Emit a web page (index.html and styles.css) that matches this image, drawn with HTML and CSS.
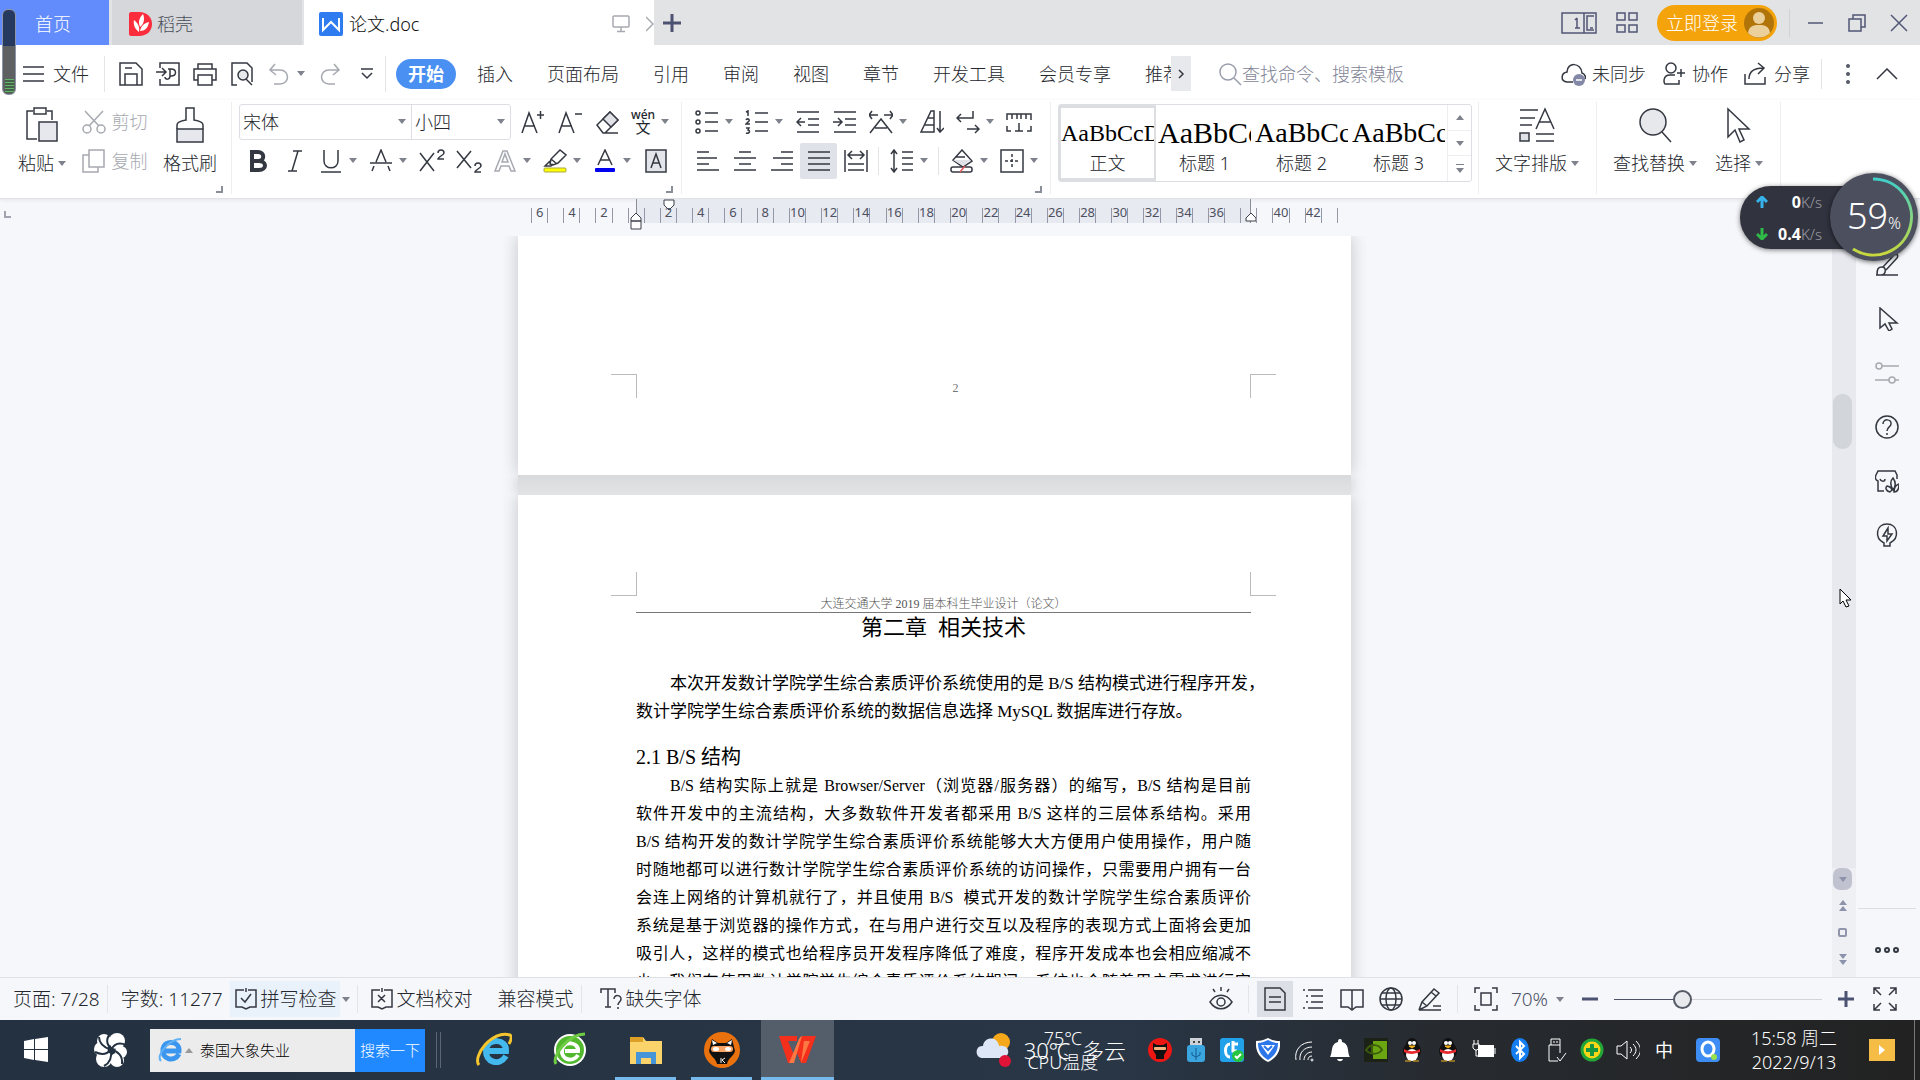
FILE: index.html
```html
<!DOCTYPE html>
<html lang="zh-CN">
<head>
    <meta charset="UTF-8">
    <meta name="viewport" content="width=device-width, initial-scale=1.0">
    <title>论文.doc</title>
    <link rel="stylesheet" href="styles.css">
</head>
<body>
    <!-- Title bar -->
    <header class="titlebar">
        <button class="tab tab-home">首页</button>
        <button class="tab tab-store">
            <svg width="24" height="24" viewBox="0 0 24 24"><path d="M2 0h8c8 0 13 5 13 12s-5 12-13 12H2c-1 0-2-1-2-2V2c0-1 1-2 2-2z" fill="#fb2c3c"/><path d="M14 2c-4 4-5 8-3 13 4-3 5-8 3-13zM5 8c-1 5 1 9 5 12 1-5-1-9-5-12zM20 10c-5 1-8 4-9 9 5 0 8-3 9-9z" fill="#fff"/></svg>
            稻壳
        </button>
        <button class="tab tab-doc">
            <svg width="24" height="24" viewBox="0 0 24 24"><rect width="24" height="24" rx="2" fill="#2f7bf0"/><path d="M4 6v12l8-8 8 8V6" fill="none" stroke="#fff" stroke-width="2"/></svg>
            <span class="tab-name">论文.doc</span>
            <svg class="icon pale" width="18" height="18" viewBox="0 0 18 18"><rect x="1" y="1" width="16" height="11" rx="1"/><path d="M9 12v4M5 16.500h8"/></svg>
            <svg class="icon pale" width="8" height="18" viewBox="0 0 8 18"><path d="M0 2l7 7-7 7"/></svg>
        </button>
        <button class="tab-add" aria-label="新建"><svg class="icon" width="20" height="20" viewBox="0 0 20 20"><path d="M10 1v18M1 10h18"/></svg></button>
        <div class="window-tools">
            <svg class="icon" width="36" height="22" viewBox="0 0 36 22"><rect x="1" y="1" width="34" height="20"/><path d="M23 1v20M33 4h-7v14h7M16 6v10M14 8l2-2M14 16h5M29 16h3"/></svg>
            <svg class="icon" width="24" height="22" viewBox="0 0 24 22"><rect x="2" y="1" width="8" height="7"/><rect x="14" y="1" width="8" height="7"/><rect x="2" y="13" width="8" height="7"/><rect x="14" y="13" width="8" height="7"/></svg>
            <button class="login">立即登录
                <svg width="30" height="30" viewBox="0 0 30 30"><circle cx="15" cy="15" r="15" fill="#b17408"/><circle cx="15" cy="10" r="6" fill="#ecd09b"/><path d="M4 25c1-7 5-8 11-8s10 1 11 8c-6 6-16 6-22 0z" fill="#ecd09b"/></svg>
            </button>
        </div>
        <div class="window-buttons">
            <button aria-label="最小化"><svg class="icon" width="18" height="18" viewBox="0 0 18 18"><path d="M2 9h15"/></svg></button>
            <button aria-label="还原"><svg class="icon" width="18" height="18" viewBox="0 0 18 18"><rect x="1" y="5" width="12" height="12"/><path d="M5 5V1h12v12h-4"/></svg></button>
            <button aria-label="关闭"><svg class="icon" width="18" height="18" viewBox="0 0 18 18"><path d="M1 1l16 16M17 1L1 17"/></svg></button>
        </div>
    </header>

    <!-- Menu row -->
    <nav class="menubar">
        <button class="file-menu"><svg class="icon" width="24" height="16" viewBox="0 0 24 16"><path d="M1 1h21M1 8h21M1 15h21"/></svg>文件</button>
        <div class="quick">
            <button aria-label="保存"><svg class="icon" width="24" height="24" viewBox="0 0 24 24"><path d="M1 1h16l6 6v16H1zM6 23V12h12v11M6 6h7"/></svg></button>
            <button aria-label="输出为PDF"><svg class="icon" width="24" height="24" viewBox="0 0 24 24"><path d="M4 6V1h19v22H4v-6M0 10h9M6 6l4 4-4 4M12 7h3c6 0 6 7 0 7h-1M14 7v7c0 4-5 4-5 1"/></svg></button>
            <button aria-label="打印"><svg class="icon" width="24" height="24" viewBox="0 0 24 24"><path d="M5 7V2h14v5M5 18H1V7h22v11h-4M5 13h14v10H5z"/></svg></button>
            <button aria-label="打印预览"><svg class="icon" width="24" height="24" viewBox="0 0 24 24"><path d="M7 23H2V1h15l5 5v14"/><circle cx="13" cy="13" r="5" fill="#e6e8ec"/><path d="M16 17l6 6"/></svg></button>
            <button class="with-caret" aria-label="撤销"><svg class="icon pale" width="24" height="24" viewBox="0 0 24 24"><path d="M8 2L3 8l6 5M3 8h10c10 0 10 14 0 14H7"/></svg><span class="caret"></span></button>
            <button aria-label="恢复"><svg class="icon pale" width="24" height="24" viewBox="0 0 24 24"><path d="M16 2l5 6-6 5M21 8H11C1 8 1 22 11 22h6"/></svg></button>
            <button aria-label="更多"><svg class="icon" width="14" height="12" viewBox="0 0 14 12"><path d="M1 1h12M2 5l5 5 5-5"/></svg></button>
        </div>
        <div class="menu-tabs">
            <button class="active">开始</button>
            <button>插入</button>
            <button>页面布局</button>
            <button>引用</button>
            <button>审阅</button>
            <button>视图</button>
            <button>章节</button>
            <button>开发工具</button>
            <button>会员专享</button>
            <button>推荐</button>
        </div>
        <button class="menu-next" aria-label="更多选项卡"><svg class="icon" width="8" height="10" viewBox="0 0 8 10"><path d="M2 1l4 4-4 4"/></svg></button>
        <label class="search">
            <svg class="icon" width="24" height="24" viewBox="0 0 24 24"><circle cx="10" cy="10" r="8"/><path d="M16 16l7 7"/></svg>
            <input type="text" aria-label="搜索" placeholder="查找命令、搜索模板">
        </label>
        <div class="share-tools">
            <button><svg class="icon" width="25" height="24" viewBox="0 0 25 24"><path d="M12 20H6c-7-1-6-9 0-10 0-10 14-10 15 1 3 1 4 4 3 6"/><circle cx="18" cy="18" r="6" fill="#8288a6" stroke="none"/><path d="M15 18h6" stroke="#fff"/></svg>未同步</button>
            <button><svg class="icon" width="24" height="24" viewBox="0 0 24 24"><circle cx="9" cy="6" r="5"/><path d="M13 13H8c-8 0-6 9-5 9h14v-4M15 11h8M19 7v8"/></svg>协作</button>
            <button><svg class="icon" width="24" height="24" viewBox="0 0 24 24"><path d="M1 12v10h20v-7M5 17c0-8 5-11 14-11M14 1l6 5-6 6"/></svg>分享</button>
        </div>
        <button class="more-menu" aria-label="更多"><svg width="4" height="20" viewBox="0 0 4 20" fill="#555b66"><circle cx="2" cy="2" r="2"/><circle cx="2" cy="10" r="2"/><circle cx="2" cy="18" r="2"/></svg></button>
        <button class="fold-menu" aria-label="收起功能区"><svg class="icon" width="22" height="12" viewBox="0 0 22 12"><path d="M1 11L11 1l10 10"/></svg></button>
    </nav>

    <!-- Ribbon -->
    <section class="ribbon">
        <div class="group clipboard">
            <button class="big"><svg class="icon" width="34" height="36" viewBox="0 0 34 36"><path d="M8 4H2v28h10M22 4h5v9M9 1h12v6H9z"/><rect x="14" y="15" width="18" height="19" fill="#e6e8ee"/></svg><span>粘贴<i class="caret"></i></span></button>
            <div class="stack">
                <button><svg class="icon pale" width="24" height="24" viewBox="0 0 24 24"><circle cx="5" cy="19" r="4"/><circle cx="19" cy="19" r="4"/><path d="M3 1l14 15M21 1L7 16"/></svg>剪切</button>
                <button><svg class="icon pale" width="24" height="24" viewBox="0 0 24 24"><rect x="7" y="1" width="15" height="17"/><path d="M7 6H1v17h15v-5"/></svg>复制</button>
            </div>
            <button class="big"><svg class="icon" width="34" height="36" viewBox="0 0 34 36"><path d="M4 22v-4c0-2 2-4 9-5V1h8v12c7 1 9 3 9 5v4"/><rect x="4" y="22" width="26" height="13" fill="#e6e8ee"/></svg><span>格式刷</span></button>
            <i class="corner"></i>
        </div>

        <div class="group">
            <div class="tool-row">
                <div class="font-box">
                    <span class="pick font-name"><select aria-label="字体"><option>宋体</option></select><i class="caret"></i></span>
                    <span class="pick font-size"><select aria-label="字号"><option>小四</option></select><i class="caret"></i></span>
                </div>
                <button class="tool" aria-label="增大字号"><svg class="icon" width="24" height="24" viewBox="0 0 24 24"><path d="M1 23L8 3l8 20M4 16h10M16 5h7M19.500 1v8"/></svg></button>
                <button class="tool" aria-label="减小字号"><svg class="icon" width="24" height="24" viewBox="0 0 24 24"><path d="M1 23L8 3l8 20M4 16h10M17 4h7"/></svg></button>
                <button class="tool" aria-label="清除格式"><svg class="icon" width="24" height="24" viewBox="0 0 24 24"><path d="M2 15L15 2l8 8-13 13H8zM10 23h13"/><path d="M8 9l7-7 8 8-7 7z" fill="#e0e2e7"/></svg></button>
                <button class="tool drop pinyin" aria-label="拼音指南"><span>wén<b>文</b></span><i class="caret"></i></button>
            </div>
            <div class="tool-row">
                <button class="tool" aria-label="加粗"><svg class="icon bold" width="24" height="24" viewBox="0 0 24 24"><path d="M6 3v18h7c8 0 8-9 0-9H6h6c7 0 7-9 0-9z"/></svg></button>
                <button class="tool" aria-label="倾斜"><svg class="icon" width="24" height="24" viewBox="0 0 24 24"><path d="M10 2h9M5 22h9M15 2L9 22"/></svg></button>
                <button class="tool drop" aria-label="下划线"><svg class="icon" width="24" height="24" viewBox="0 0 24 24"><path d="M5 1v11c0 9 14 9 14 0V1M2 23h20"/></svg><i class="caret"></i></button>
                <button class="tool drop" aria-label="删除线"><svg class="icon" width="24" height="24" viewBox="0 0 24 24"><path d="M7 13l5-12 5 12M1 14h22M5 17l-2 5M19 17l2 5"/></svg><i class="caret"></i></button>
                <button class="tool" aria-label="上标"><svg class="icon" width="26" height="24" viewBox="0 0 26 24"><path d="M1 4l14 18M15 4L1 22M19 4c0-4 6-4 6 0 0 2-6 4-6 6h6"/></svg></button>
                <button class="tool" aria-label="下标"><svg class="icon" width="26" height="24" viewBox="0 0 26 24"><path d="M1 2l14 17M15 2L1 19M19 17c0-4 6-4 6 0 0 2-6 4-6 6h6"/></svg></button>
                <button class="tool drop" aria-label="文字效果"><svg class="icon pale" width="24" height="24" viewBox="0 0 24 24"><path d="M2 22L10 2h4l8 20h-4l-2-5H8l-2 5zM9 13h6l-3-8z"/></svg><i class="caret"></i></button>
                <button class="tool drop" aria-label="突出显示"><svg class="icon" width="24" height="24" viewBox="0 0 24 24"><path d="M7 15l1-5 9-9 6 5-8 8-5 2zM8 10l6 5M7 12l-5 5h6l2-2"/><rect x="1" y="19" width="22" height="4" rx="1" fill="#ffff00" stroke="#a7a74a" stroke-width="1"/></svg><i class="caret"></i></button>
                <button class="tool drop" aria-label="字体颜色"><svg class="icon" width="24" height="24" viewBox="0 0 24 24"><path d="M5 16l7-15 7 15M7 11h10"/><rect x="2" y="19" width="20" height="4" rx="1" fill="#0000f0" stroke="none"/></svg><i class="caret"></i></button>
                <button class="tool" aria-label="字符底纹"><svg class="icon" width="24" height="24" viewBox="0 0 24 24"><rect x="2" y="1" width="20" height="22" fill="#e3e5ea"/><path d="M7 19l5-14 5 14M9 14h6"/></svg></button>
            </div>
            <i class="corner"></i>
        </div>

        <div class="group">
            <div class="tool-row">
                <button class="tool drop" aria-label="项目符号"><svg class="icon" width="24" height="24" viewBox="0 0 24 24"><circle cx="3" cy="3" r="2"/><circle cx="3" cy="12" r="2"/><circle cx="3" cy="21" r="2"/><path d="M10 3h13M10 12h13M10 21h13"/></svg><i class="caret"></i></button>
                <button class="tool drop" aria-label="编号"><svg class="icon" width="24" height="24" viewBox="0 0 24 24"><path d="M1 2l2-1v5M1 10c1-2 4-1 3 1l-3 3h4M1 18h3l-1 2c3 1 1 4-2 3M10 3h13M10 12h13M10 21h13"/></svg><i class="caret"></i></button>
                <button class="tool" aria-label="减少缩进"><svg class="icon" width="24" height="24" viewBox="0 0 24 24"><path d="M1 2h22M12 9h11M12 15h11M1 22h22M9 12H1M5 8l-4 4 4 4"/></svg></button>
                <button class="tool" aria-label="增加缩进"><svg class="icon" width="24" height="24" viewBox="0 0 24 24"><path d="M1 2h22M12 9h11M12 15h11M1 22h22M0 12h8M5 8l4 4-4 4"/></svg></button>
                <button class="tool drop" aria-label="中文版式"><svg class="icon" width="24" height="24" viewBox="0 0 24 24"><path d="M1 23l11-14 11 14M6 18h12M0 5h9M3 1L0 5l3 4M15 5h9M21 1l3 4-3 4"/></svg><i class="caret"></i></button>
                <button class="tool" aria-label="排序"><svg class="icon" width="24" height="24" viewBox="0 0 24 24"><path d="M1 22L11 1h3v21zM8 8h6M5 15h9M20 1v21M17 18l3 4 4-4"/></svg></button>
                <button class="tool drop" aria-label="显示段落标记"><svg class="icon" width="24" height="24" viewBox="0 0 24 24"><path d="M17 1v7H1M5 4L1 8l4 4M11 19h12M19 15l4 4-4 4"/></svg><i class="caret"></i></button>
                <button class="tool" aria-label="制表位"><svg class="icon" width="26" height="20" viewBox="0 0 26 20"><path d="M1 8V2h24v6M6 2v5M11 2v5M15 2v5M20 2v5M1 14v5h4M25 14v5h-4M13 11v8M9 19h8"/></svg></button>
            </div>
            <div class="tool-row">
                <button class="tool" aria-label="左对齐"><svg class="icon" width="24" height="24" viewBox="0 0 24 24"><path d="M1 3h12M1 9h20M1 15h12M1 21h22"/></svg></button>
                <button class="tool" aria-label="居中"><svg class="icon" width="24" height="24" viewBox="0 0 24 24"><path d="M6 3h12M1 9h22M6 15h12M1 21h22"/></svg></button>
                <button class="tool" aria-label="右对齐"><svg class="icon" width="24" height="24" viewBox="0 0 24 24"><path d="M11 3h12M3 9h20M11 15h12M1 21h22"/></svg></button>
                <button class="tool pressed" aria-label="两端对齐"><svg class="icon" width="24" height="24" viewBox="0 0 24 24"><path d="M1 3h22M1 9h22M1 15h22M1 21h22"/></svg></button>
                <button class="tool" aria-label="分散对齐"><svg class="icon" width="24" height="24" viewBox="0 0 24 24"><path d="M1 1v22M23 1v22M4 15h16M4 21h16M4 6h16M8 2L4 6l4 4M16 2l4 4-4 4"/></svg></button>
                <i class="bar"></i>
                <button class="tool drop" aria-label="行距"><svg class="icon" width="24" height="24" viewBox="0 0 24 24"><path d="M4 1v22M1 5l3-4 3 4M1 19l3 4 3-4M12 3h11M12 9h11M12 15h11M12 21h11"/></svg><i class="caret"></i></button>
                <i class="bar"></i>
                <button class="tool drop" aria-label="底纹颜色"><svg class="icon" width="24" height="24" viewBox="0 0 24 24"><path d="M12 1l10 11-9 6-10-7zM5 8h10" fill="#fff"/><path d="M3 11h18l-8 6z" fill="#e0e2e7" stroke="none"/><rect x="1" y="18" width="21" height="5" rx="2" fill="#fff"/><path d="M10 23l5-6" stroke="#e05a5a"/></svg><i class="caret"></i></button>
                <button class="tool drop" aria-label="边框"><svg class="icon" width="24" height="24" viewBox="0 0 24 24"><rect x="1" y="1" width="22" height="22"/><path d="M12 5v14M5 12h14" stroke-dasharray="3 2"/></svg><i class="caret"></i></button>
            </div>
            <i class="corner"></i>
        </div>

        <div class="group">
            <div class="gallery">
                <button class="style selected"><span class="sample">AaBbCcDd</span>正文</button>
                <button class="style"><span class="sample large">AaBbCcD</span>标题 1</button>
                <button class="style"><span class="sample medium">AaBbCcD</span>标题 2</button>
                <button class="style"><span class="sample medium">AaBbCcD</span>标题 3</button>
                <div class="gallery-nav">
                    <button aria-label="上一行"><i class="caret up"></i></button>
                    <button aria-label="下一行"><i class="caret"></i></button>
                    <button class="expand" aria-label="展开"><i class="caret"></i></button>
                </div>
            </div>
        </div>

        <div class="group roomy">
            <button class="big"><svg class="icon" width="36" height="36" viewBox="0 0 36 36"><path d="M1 3h18M1 11h15M1 18h12M17 22L26 2l9 20M20 15h12M17 27h18M17 34h18"/><rect x="1" y="26" width="9" height="8" fill="#e0e2e7"/></svg><span>文字排版<i class="caret"></i></span></button>
        </div>
        <div class="group roomy">
            <button class="big"><svg class="icon" width="36" height="36" viewBox="0 0 36 36"><circle cx="16" cy="15" r="13" fill="#e6e8ec"/><path d="M25 25l9 10"/></svg><span>查找替换<i class="caret"></i></span></button>
            <button class="big"><svg class="icon" width="36" height="36" viewBox="0 0 36 36"><path d="M7 2v28l7-7 5 12 4-2-5-11h10z"/></svg><span>选择<i class="caret"></i></span></button>
        </div>
    </section>

    <!-- Document area -->
    <main class="workspace">
        <div class="editor">
            <div class="ruler">
                <i class="tab-mark"></i>
                <div class="scale">
                    <span>6</span><span>4</span><span>2</span><span></span><span>2</span><span>4</span><span>6</span><span>8</span><span>10</span><span>12</span><span>14</span><span>16</span><span>18</span><span>20</span><span>22</span><span>24</span><span>26</span><span>28</span><span>30</span><span>32</span><span>34</span><span>36</span><span></span><span>40</span><span>42</span>
                    <div class="text-range">
                        <svg class="indent-left" width="12" height="18" viewBox="0 0 12 18"><path d="M1 9V6l5-5 5 5v3zM1 9h10v8H1z"/></svg>
                        <svg class="indent-first" width="12" height="12" viewBox="0 0 12 12"><path d="M1 1h10v5l-5 5-5-5z"/></svg>
                        <svg class="indent-right" width="12" height="10" viewBox="0 0 12 10"><path d="M1 9V6l5-5 5 5v3z"/></svg>
                    </div>
                </div>
            </div>
            <div class="pages">
                <article class="page page-end">
                    <div class="marks bottom"><i></i><span class="page-number">2</span><i></i></div>
                </article>
                <div class="page-gap"></div>
                <article class="page page-start">
                    <div class="marks top"><i></i><i></i></div>
                    <p class="running-head">大连交通大学 2019 届本科生毕业设计（论文）</p>
                    <h1>第二章&nbsp; 相关技术</h1>
                    <p class="intro">本次开发数计学院学生综合素质评价系统使用的是 B/S 结构模式进行程序开发，<br>数计学院学生综合素质评价系统的数据信息选择 MySQL 数据库进行存放。</p>
                    <h2>2.1 B/S 结构</h2>
                    <p class="text">B/S 结构实际上就是 Browser/Server（浏览器/服务器）的缩写，B/S 结构是目前<br>软件开发中的主流结构，大多数软件开发者都采用 B/S 这样的三层体系结构。采用<br>B/S 结构开发的数计学院学生综合素质评价系统能够大大方便用户使用操作，用户随<br>时随地都可以进行数计学院学生综合素质评价系统的访问操作，只需要用户拥有一台<br>会连上网络的计算机就行了，并且使用 B/S&nbsp; 模式开发的数计学院学生综合素质评价<br>系统是基于浏览器的操作方式，在与用户进行交互以及程序的表现方式上面将会更加<br>吸引人，这样的模式也给程序员开发程序降低了难度，程序开发成本也会相应缩减不<br>少，我们在使用数计学院学生综合素质评价系统期间，系统也会随着用户需求进行完</p>
                </article>
            </div>
        </div>
        <div class="scrollbar">
            <i class="thumb"></i>
            <div class="scroll-end">
                <button class="down" aria-label="向下"><i class="caret"></i></button>
                <button aria-label="上一页"><i class="caret up"></i><i class="caret up"></i></button>
                <button aria-label="选择浏览对象"><i class="square"></i></button>
                <button aria-label="下一页"><i class="caret"></i><i class="caret"></i></button>
            </div>
        </div>
        <aside class="sidebar">
            <button aria-label="样式"><svg class="icon" width="24" height="24" viewBox="0 0 24 24"><path d="M1 22h22M2 22c0-6 1-8 5-8s5 7-1 8M8 14L19 2c2-2 5 0 3 3L11 17"/></svg></button>
            <button aria-label="选择"><svg class="icon" width="24" height="24" viewBox="0 0 24 24"><path d="M5 1v20l5-4 4 7 3-2-3-6h8z"/></svg></button>
            <button aria-label="属性"><svg class="icon pale" width="24" height="24" viewBox="0 0 24 24"><circle cx="4" cy="5" r="3"/><path d="M7 5h17M0 19h14M20 19h4"/><circle cx="17" cy="19" r="3"/></svg></button>
            <button aria-label="帮助"><svg class="icon" width="24" height="24" viewBox="0 0 24 24"><circle cx="12" cy="12" r="11"/><path d="M8 9c0-6 9-5 8 0 0 3-4 3-4 7M12 18v2"/></svg></button>
            <button aria-label="素材"><svg class="icon" width="24" height="24" viewBox="0 0 24 24"><path d="M9 22H3V12C0 11 0 8 1 6l2-4h17l2 4v4M5 10c1 3 5 3 5 0M12 17c-2 2-1 5 3 6 3-2 2-5-3-6zM18 9c-3 3-3 7 0 12 3-4 3-8 0-12zM24 15c-3 1-5 4-5 8 4 0 5-3 5-8z"/></svg></button>
            <button aria-label="技巧"><svg class="icon" width="24" height="24" viewBox="0 0 24 24"><path d="M9 20c-10-5-8-19 3-19s13 14 3 19v3H9zM13 5l-5 8h4v5l5-7h-4z"/></svg></button>
            <button class="side-more" aria-label="更多"><svg class="icon" width="24" height="8" viewBox="0 0 24 8"><circle cx="3" cy="4" r="2"/><circle cx="12" cy="4" r="2"/><circle cx="21" cy="4" r="2"/></svg></button>
        </aside>
    </main>

    <!-- Status bar -->
    <footer class="statusbar">
        <button>页面: 7/28</button><i class="bar"></i>
        <button>字数: 11277</button>
        <button class="spell"><svg class="icon" width="22" height="22" viewBox="0 0 22 22"><path d="M9 2H1v17h6l4 2 4-2h6V2h-8M11 0v4M6 10l4 4 6-8"/></svg>拼写检查</button>
        <i class="caret"></i><i class="bar"></i>
        <button><svg class="icon" width="22" height="22" viewBox="0 0 22 22"><path d="M9 2H1v17h6l4 2 4-2h6V2h-8M11 0v4M7 7l7 7M14 7l-7 7"/></svg>文档校对</button>
        <button class="spaced">兼容模式</button><i class="bar"></i>
        <button class="spaced"><svg class="icon" width="22" height="22" viewBox="0 0 22 22"><path d="M1 5V1h14v4M8 1v18M5 19h6M14 11c0-5 7-4 7 0 0 3-3 3-3 6M18 19v2"/></svg>缺失字体</button>
        <div class="view-tools">
            <button aria-label="护眼模式"><svg class="icon" width="24" height="24" viewBox="0 0 24 24"><path d="M1 15c6-9 16-9 22 0-6 9-16 9-22 0zM12 0v4M4 2l2 3M20 2l-2 3"/><circle cx="12" cy="15" r="4"/></svg></button>
            <i class="bar"></i>
            <button class="pressed" aria-label="页面视图"><svg class="icon" width="22" height="24" viewBox="0 0 22 24"><path d="M1 1h15l5 5v17H1zM5 10h12M5 15h12"/></svg></button>
            <button aria-label="大纲"><svg class="icon" width="22" height="22" viewBox="0 0 22 22"><path d="M1 2h2M6 2h15M4 8h2M9 8h12M4 14h2M9 14h12M1 20h2M6 20h15"/></svg></button>
            <button aria-label="阅读版式"><svg class="icon" width="24" height="24" viewBox="0 0 24 24"><path d="M12 3H1v17h7l4 3 4-3h7V3H12zM12 3v20"/></svg></button>
            <button aria-label="Web版式"><svg class="icon" width="24" height="24" viewBox="0 0 24 24"><circle cx="12" cy="12" r="11"/><ellipse cx="12" cy="12" rx="5" ry="11"/><path d="M1 12h22M3 6h18M3 18h18"/></svg></button>
            <button aria-label="写作模式"><svg class="icon" width="24" height="24" viewBox="0 0 24 24"><path d="M1 23l3-8L16 2l5 4L9 19l-8 4h22M4 15l5 4M13 5l5 4M15 19h8"/></svg></button>
            <i class="bar"></i>
            <button aria-label="最佳显示比例"><svg class="icon" width="24" height="24" viewBox="0 0 24 24"><path d="M1 6V1h5M18 1h5v5M23 18v5h-5M6 23H1v-5"/><rect x="7" y="6" width="10" height="12"/></svg></button>
            <button class="zoom-value">70%<i class="caret"></i></button>
            <button class="zoom-out" aria-label="缩小"><svg class="icon" width="18" height="18" viewBox="0 0 18 18"><path d="M1 9h16"/></svg></button>
            <input class="zoom" type="range" min="0" max="100" value="31" aria-label="显示比例">
            <button class="zoom-in" aria-label="放大"><svg class="icon" width="18" height="18" viewBox="0 0 18 18"><path d="M1 9h16M9 1v16"/></svg></button>
            <button aria-label="全屏显示"><svg class="icon" width="24" height="24" viewBox="0 0 24 24"><path d="M1 7V1h6M1 1l7 7M17 1h6v6M23 1l-7 7M1 17v6h6M1 23l7-7M17 23h6v-6M23 23l-7-7"/></svg></button>
        </div>
    </footer>

    <!-- Desktop taskbar -->
    <div class="taskbar">
        <button class="start" aria-label="开始菜单"><svg width="26" height="26" viewBox="0 0 26 26" fill="#fff"><path d="M1 4l10-2v10H1zM12 2l13-2v12H12zM1 13h10v10L1 21zM12 13h13v12l-13-2z"/></svg></button>
        <button class="start" aria-label="助手"><svg width="34" height="34" viewBox="0 0 34 34"><g fill="#fff"><circle cx="10" cy="8" r="7"/><circle cx="23" cy="8" r="8"/><circle cx="27" cy="19" r="6"/><circle cx="23" cy="27" r="7"/><circle cx="10" cy="26" r="8"/><circle cx="7" cy="16" r="7"/></g><path d="M16 1c-5 6-3 12 3 16M32 12c-7-3-12-1-15 5M28 31c1-8-4-13-11-14M10 33c6-3 8-9 7-16M1 19c6 3 12 2 16-2M5 4c0 6 4 10 12 13" fill="none" stroke="#233140" stroke-width="2"/></svg></button>
        <form class="web-search">
            <svg width="26" height="26" viewBox="0 0 26 26"><path d="M22 17c-5 9-18 5-16-5C8 2 23 4 22 14H8" fill="none" stroke="#3a96ee" stroke-width="5"/><path d="M4 24c-6-5 8-22 20-22" fill="none" stroke="#62b1f4" stroke-width="2"/></svg>
            <i class="caret up"></i>
            <input type="text" value="泰国大象失业" aria-label="网页搜索">
            <button type="button">搜索一下</button>
        </form>
        <i class="grip"></i>
        <div class="apps">
            <button aria-label="浏览器"><svg width="36" height="36" viewBox="0 0 36 36"><path d="M30 24C23 35 9 30 10 18 12 5 31 7 30 19H13" fill="none" stroke="#43b9ee" stroke-width="6"/><path d="M3 33C-4 25 16-3 34 3c3 2 0 7-1 9" fill="none" stroke="#f6c52d" stroke-width="3"/></svg></button>
            <button aria-label="安全浏览器"><svg width="36" height="36" viewBox="0 0 36 36"><circle cx="18" cy="18" r="16" fill="#fff"/><circle cx="18" cy="18" r="14" fill="#52b92e"/><path d="M26 23c-5 8-17 5-16-5 2-10 17-8 16 1H13" fill="none" stroke="#fff" stroke-width="4"/><path d="M4 32C-1 24 17 2 33 2" fill="none" stroke="#6dcc43" stroke-width="3"/></svg></button>
            <button class="running" aria-label="文件夹"><svg width="36" height="36" viewBox="0 0 36 36"><path d="M2 5h13l3 4h16v23H2z" fill="#fad36b"/><path d="M2 5h13v5H2z" fill="#dca026"/><path d="M8 32V20h20v12h-5v-6H13v6z" fill="#4695d8"/></svg></button>
            <button class="running" aria-label="加速器"><svg width="36" height="36" viewBox="0 0 36 36"><circle cx="18" cy="18" r="18" fill="#e9720f"/><path d="M5 19L8 7l6 4h8l6-4 3 12c-1 5-7 7-8 13H13c-1-6-7-8-8-13z" fill="#111"/><path d="M8 8l1 5 4-2zM28 8l-1 5-4-2z" fill="#fff"/><rect x="7" y="14" width="22" height="6" rx="3" fill="#f7a467"/><ellipse cx="12" cy="17" rx="3" ry="2" fill="#fff"/><ellipse cx="24" cy="17" rx="3" ry="2" fill="#fff"/><path d="M17 26v5M21 26l-3 2 3 3" stroke="#fff" fill="none"/></svg></button>
            <button class="running current" aria-label="WPS"><svg width="38" height="30" viewBox="0 0 38 30"><path d="M0 1h18v5H9l6 14 6-17c1-2 2-2 4-2h12L27 28h-5l-4-10-4 10H9z" fill="#f4301c"/><path d="M10 28L20 4c1-2 2-3 5-3h-2l-8 27zM22 28l9-22h-6" fill="#ff7742"/></svg></button>
        </div>
        <div class="weather">
            <svg width="36" height="34" viewBox="0 0 36 34"><circle cx="25" cy="9" r="9" fill="#f6a81b"/><path d="M7 25C-2 25-1 12 7 13 8 3 22 3 23 13c12-2 12 12 2 12z" fill="#dce6f7"/><circle cx="29" cy="28" r="6" fill="#df1238"/></svg>
            <div class="weather-text">
                <span class="forecast">30℃&nbsp; 多云</span>
                <span class="cpu">75℃<br>CPU温度</span>
            </div>
        </div>
        <div class="tray">
            <svg width="24" height="24" viewBox="0 0 24 24"><circle cx="12" cy="12" r="12" fill="#ec1712"/><path d="M5 12V5l4 2h6l4-2v7l-3 5v4H8v-4z" fill="#111"/><rect x="6" y="9" width="12" height="3" rx="1" fill="#f3b27d"/></svg>
            <svg width="24" height="24" viewBox="0 0 24 24"><rect x="6" y="0" width="12" height="8" fill="#ccd2d8"/><path d="M9 3h2v2H9zM14 3h2v2h-2z" fill="#444"/><rect x="3" y="7" width="18" height="17" rx="3" fill="#3ba5df"/><path d="M12 10v12M8 14v3l4 2 4-2v-3" fill="none" stroke="#135d91"/></svg>
            <svg width="24" height="24" viewBox="0 0 24 24"><rect width="24" height="24" rx="3" fill="#21a1ea"/><path d="M18 6h-5V3M13 6v7h4M10 6c-6 0-6 13 0 13" fill="none" stroke="#fff" stroke-width="3"/><circle cx="18" cy="18" r="6" fill="#26c441"/><path d="M15 18l2 2 4-4" fill="none" stroke="#fff" stroke-width="2"/></svg>
            <svg width="24" height="24" viewBox="0 0 24 24"><path d="M12 0c4 2 7 3 12 3 1 11-4 17-12 21C4 20-1 14 0 3c5 0 8-1 12-3z" fill="#fff"/><path d="M12 2c4 2 7 3 10 3 0 9-4 13-10 17C6 18 2 14 2 5c3 0 6-1 10-3z" fill="#2d76ea"/><path d="M5 7h14l-7 10z" fill="#fff"/><path d="M8 8l4 4 4-4" fill="none" stroke="#2d76ea" stroke-width="2"/></svg>
            <svg class="icon white" width="24" height="24" viewBox="0 0 24 24"><path d="M4 22C2 12 9 4 20 4M8 22C7 15 12 9 20 9M12 22c0-4 3-8 8-8M16 22c0-2 1-4 4-4"/><circle cx="20" cy="22" r="1"/></svg>
            <svg width="24" height="24" viewBox="0 0 24 24" fill="#fff"><path d="M12 1c2 0 2 2 2 3 8 2 5 11 8 15H2C5 15 2 6 10 4c0-1 0-3 2-3zM9 21h6c-1 3-5 3-6 0z"/></svg>
            <svg width="24" height="24" viewBox="0 0 24 24"><rect width="24" height="24" fill="#1c2316"/><path d="M9 3h14v18H9z" fill="#6ba512"/><path d="M2 12c5-7 13-6 16 0-4 5-12 5-16 0zM8 8v8" fill="none" stroke="#3c5d0c" stroke-width="2"/></svg>
            <svg width="24" height="24" viewBox="0 0 24 24"><ellipse cx="12" cy="13" rx="9" ry="9" fill="#111"/><ellipse cx="12" cy="7" rx="6" ry="7" fill="#111"/><ellipse cx="12" cy="17" rx="6" ry="6" fill="#fff"/><circle cx="10" cy="5" r="2" fill="#fff"/><circle cx="14" cy="5" r="2" fill="#fff"/><path d="M9 8h6l-3 2zM5 23h6M13 23h6" stroke="#f4b21d" stroke-width="1" fill="#f4b21d"/><path d="M4 11c5 3 11 3 16 0v3c-5 2-10 3-16 0z" fill="#e7282c"/></svg>
            <svg width="24" height="24" viewBox="0 0 24 24"><ellipse cx="12" cy="13" rx="9" ry="9" fill="#111"/><ellipse cx="12" cy="7" rx="6" ry="7" fill="#111"/><ellipse cx="12" cy="17" rx="6" ry="6" fill="#fff"/><circle cx="10" cy="5" r="2" fill="#fff"/><circle cx="14" cy="5" r="2" fill="#fff"/><path d="M9 8h6l-3 2zM5 23h6M13 23h6" stroke="#f4b21d" stroke-width="1" fill="#f4b21d"/><path d="M4 11c5 3 11 3 16 0v3c-5 2-10 3-16 0z" fill="#e7282c"/></svg>
            <svg width="24" height="24" viewBox="0 0 24 24"><rect x="6" y="7" width="16" height="12" fill="#fff"/><path d="M23 10v6M4 12v6h3M1 6h6v4l-2 2H3l-2-2zM2 2v4M6 2v4" fill="none" stroke="#fff"/></svg>
            <svg width="24" height="24" viewBox="0 0 24 24"><ellipse cx="12" cy="12" rx="9" ry="12" fill="#147ef0"/><path d="M8 8l8 8-4 4V4l4 4-8 8" fill="none" stroke="#fff" stroke-width="2"/></svg>
            <svg class="icon white" width="24" height="24" viewBox="0 0 24 24"><path d="M7 7V1h9v6M10 3v2M13 3v2M16 15V7H5v16h9M13 19l3 4 6-8"/></svg>
            <svg width="24" height="24" viewBox="0 0 24 24"><circle cx="12" cy="12" r="10" fill="#f8d71a" stroke="#22a638" stroke-width="3"/><path d="M12 6v12M6 12h12" stroke="#169640" stroke-width="4"/></svg>
            <svg class="icon white" width="24" height="24" viewBox="0 0 24 24"><path d="M1 8h4l6-5v18l-6-5H1zM14 9c2 2 2 4 0 6M17 6c4 4 4 8 0 12M20 3c6 6 6 12 0 18"/></svg>
            <span class="ime">中</span>
            <svg class="wide" width="24" height="24" viewBox="0 0 24 24"><rect width="24" height="24" rx="4" fill="#3d8df5"/><ellipse cx="12" cy="11" rx="6" ry="7" fill="none" stroke="#fff" stroke-width="3"/><circle cx="18" cy="19" r="3" fill="#9be14d"/></svg>
        </div>
        <div class="clock">15:58 周二<br>2022/9/13</div>
        <svg width="26" height="24" viewBox="0 0 26 24"><path d="M0 1h26v22H0z" fill="#f5bd45"/><path d="M10 7l6 5-6 5z" fill="#fff"/></svg>
        <i class="show-desktop"></i>
    </div>

    <!-- Floating widgets -->
    <div class="level"></div>
    <div class="netmeter">
        <div class="speeds">
            <span><svg width="12" height="12" viewBox="0 0 12 12"><path d="M6 12V2M1 6l5-5 5 5" fill="none" stroke="#36b3ea" stroke-width="3"/></svg><b>0</b>K/s</span>
            <span><svg width="12" height="12" viewBox="0 0 12 12"><path d="M6 0v10M1 6l5 5 5-5" fill="none" stroke="#2ebb47" stroke-width="3"/></svg><b>0.4</b>K/s</span>
        </div>
        <div class="usage">
            <svg width="88" height="88" viewBox="0 0 88 88"><defs><linearGradient id="ring" x2="0" y2="1"><stop offset="0" stop-color="#3fd0c9"/><stop offset="1" stop-color="#c9d83c"/></linearGradient></defs><path d="M43 6a38 38 0 1 1-20 70" fill="none" stroke="url(#ring)" stroke-width="3"/></svg>
            <span>59<small>%</small></span>
        </div>
    </div>
    <svg class="pointer" width="13" height="20" viewBox="0 0 13 20"><path d="M1 1v15l3-3 3 6 3-1-3-6h5z" fill="#fff" stroke="#000" stroke-width="1"/></svg>
</body>
</html>
```
FILE: styles.css
```css
* {
    box-sizing: border-box;
}
body {
    margin: 0;
    height: 100vh;
    display: flex;
    flex-direction: column;
    overflow: hidden;
    font-family: "Noto Sans", "Noto Sans CJK SC", sans-serif;
    font-size: 18px;
    font-weight: 300;
    line-height: 24px;
    color: #23262c;
    background: #f5f7fa;
}
button, input, select {
    font: inherit;
    color: inherit;
    background: none;
    border: none;
    padding: 0;
    margin: 0;
    white-space: nowrap;
}
svg {
    flex: none;
    display: block;
}
.icon {
    fill: none;
    stroke: #343841;
    stroke-width: 1.5;
}
.icon.bold {
    stroke-width: 4;
}
.icon.pale {
    stroke: #a6a9b0;
}
.icon.white {
    stroke: #fff;
    stroke-width: 1;
}
.caret {
    flex: none;
    display: inline-block;
    border: 4px solid transparent;
    border-top: 5px solid #7e828c;
    border-bottom: 0;
}
.caret.up {
    border-top: 0;
    border-bottom: 5px solid #7e828c;
}
.bar {
    flex: none;
    width: 1px;
    height: 28px;
    background: #e2e4e8;
}

/* title bar */
.titlebar {
    display: flex;
    flex: none;
    height: 45px;
    align-items: center;
    background: #e2e3e5;
}
.tab {
    display: flex;
    align-items: center;
    height: 100%;
    gap: 4px;
    padding: 2px 17px 0;
}
.tab-home {
    width: 109px;
    padding-left: 35px;
    background: #628cfc;
    color: #fff;
}
.tab-store {
    width: 190px;
    margin: 0 2px 0 3px;
    background: #d6d7da;
    color: #4a4f5a;
}
.tab-doc {
    width: 350px;
    padding: 2px 0 0 15px;
    gap: 6px;
    background: #fff;
    color: #111;
}
.tab-name {
    flex: 1;
    text-align: left;
}
.tab-doc .icon {
    margin-left: 10px;
}
.tab-add {
    width: 36px;
    padding-left: 8px;
}
.tab-add .icon {
    stroke: #4c5272;
    stroke-width: 3;
}
.window-tools {
    display: flex;
    align-items: center;
    gap: 18px;
    margin-left: auto;
    padding-right: 12px;
}
.window-tools .icon, .window-buttons .icon {
    stroke: #505674;
}
.login {
    display: flex;
    align-items: center;
    justify-content: space-between;
    width: 120px;
    height: 36px;
    padding: 0 3px 0 9px;
    border-radius: 18px;
    background: #f5a30a;
    color: #fff;
}
.window-buttons {
    display: flex;
    border-left: 1px solid #d0d2d6;
    padding-left: 4px;
}
.window-buttons button {
    width: 42px;
    height: 28px;
    display: grid;
    place-items: center;
}

/* menu row */
.menubar {
    display: flex;
    flex: none;
    align-items: center;
    height: 55px;
    padding-top: 2px;
    background: #fff;
}
.file-menu {
    display: flex;
    align-items: center;
    gap: 7px;
    padding: 0 15px 0 22px;
    height: 36px;
    border-right: 1px solid #e2e4e8;
}
.quick {
    display: flex;
    align-items: center;
    height: 36px;
    padding-left: 7px;
    border-right: 1px solid #e2e4e8;
}
.quick button {
    width: 37px;
    display: flex;
    align-items: center;
    justify-content: center;
}
.quick .with-caret {
    width: 51px;
    gap: 6px;
}
.menu-tabs {
    display: flex;
    align-items: center;
    gap: 34px;
    padding-left: 10px;
    width: 785px;
    overflow: hidden;
}
.menu-tabs .active {
    flex: none;
    width: 60px;
    height: 30px;
    margin-right: -13px;
    border-radius: 15px;
    background: #4a90f2;
    color: #fff;
    font-weight: 700;
}
.menu-next {
    display: grid;
    place-items: center;
    width: 20px;
    height: 35px;
    background: #e7e9ec;
}
.search {
    display: flex;
    align-items: center;
    flex: 1;
    padding-left: 27px;
}
.search .icon {
    stroke: #9a9eac;
}
.search input {
    flex: 1;
}
.search input::placeholder {
    color: #7f8496;
}
.share-tools {
    display: flex;
    gap: 16px;
    padding-right: 11px;
}
.share-tools button {
    display: flex;
    align-items: center;
    gap: 6px;
}
.more-menu {
    width: 52px;
    height: 30px;
    display: grid;
    place-items: center;
    border-left: 1px solid #e2e4e8;
}
.fold-menu {
    padding: 0 22px 0 3px;
}

/* ribbon */
.ribbon {
    display: flex;
    flex: none;
    height: 99px;
    padding-top: 2px;
    background: #fff;
    border-bottom: 1px solid #e0e2e6;
    box-shadow: 0 1px 4px rgba(0, 0, 0, 0.08);
}
.group {
    position: relative;
    height: 92px;
    padding: 0 6px 0 7px;
    border-right: 1px solid #eceef1;
}
.corner {
    position: absolute;
    right: 8px;
    bottom: 1px;
    width: 7px;
    height: 7px;
    border: solid #8a8e98;
    border-width: 0 2px 2px 0;
}
.clipboard {
    display: flex;
    width: 232px;
    padding: 0 14px 0 18px;
    justify-content: space-between;
}
.big {
    display: flex;
    flex-direction: column;
    align-items: center;
    gap: 8px;
    height: 78px;
    padding-top: 5px;
}
.big span {
    display: flex;
    align-items: center;
    gap: 4px;
}
.stack button {
    display: flex;
    align-items: center;
    gap: 6px;
    height: 39px;
    color: #a6a9b0;
}
.tool-row {
    display: flex;
    align-items: center;
    height: 39px;
}
.tool {
    display: flex;
    align-items: center;
    justify-content: center;
    width: 37px;
    height: 36px;
}
.tool.drop {
    width: 50px;
    padding-left: 6px;
    gap: 6px;
    justify-content: flex-start;
}
.tool.pressed {
    background: #dfe2e8;
    border-radius: 2px;
}
.tool-row .bar {
    margin: 0 5px 0 4px;
}
.pinyin span {
    width: 24px;
    font-size: 12px;
    font-weight: 500;
    line-height: 11px;
    text-align: center;
}
.pinyin b {
    display: block;
    font-size: 15px;
    font-weight: 400;
    line-height: 15px;
}
.font-box {
    display: flex;
    width: 272px;
    height: 36px;
    margin-right: 3px;
    border: 1px solid #dcdee3;
    border-radius: 3px;
}
.pick {
    display: flex;
    align-items: center;
    padding: 0 5px 0 3px;
}
.font-name {
    width: 172px;
    border-right: 1px solid #dcdee3;
}
.font-size {
    flex: 1;
}
.pick select {
    flex: 1;
    appearance: none;
}
.gallery {
    display: flex;
    height: 78px;
    margin-top: 2px;
    border: 1px solid #dcdee3;
    border-radius: 3px;
}
.style {
    width: 97px;
    overflow: hidden;
    padding-top: 3px;
    border: 3px solid transparent;
    border-right-width: 2px;
    border-left-width: 2px;
}
.style.selected {
    border-color: #dcdee2;
}
.sample {
    display: block;
    height: 36px;
    line-height: 36px;
    color: #000;
    font-family: "Liberation Serif", serif;
    font-size: 24px;
    font-weight: 400;
    text-align: left;
    overflow: hidden;
}
.sample.large {
    font-size: 30px;
}
.sample.medium {
    font-size: 28px;
}
.gallery-nav {
    display: flex;
    flex-direction: column;
    width: 24px;
    border-left: 1px solid #eceef1;
}
.gallery-nav button {
    flex: 1;
    display: flex;
    flex-direction: column;
    align-items: center;
    justify-content: center;
    gap: 3px;
}
.gallery-nav button + button {
    border-top: 1px solid #eceef1;
}
.expand::before {
    content: "";
    width: 8px;
    height: 1px;
    background: #7e828c;
}
.roomy {
    display: flex;
    gap: 18px;
    padding: 0 17px 0 16px;
}

/* document area */
.workspace {
    display: flex;
    flex: 1;
    min-height: 0;
}
.editor {
    flex: 1;
    min-width: 0;
    overflow: hidden;
}
.ruler {
    position: relative;
    height: 37px;
    padding-left: 37px;
}
.tab-mark {
    position: absolute;
    left: 4px;
    top: 12px;
    width: 7px;
    height: 7px;
    border: solid #a0a4ae;
    border-width: 0 0 2px 2px;
}
.scale {
    position: relative;
    display: flex;
    width: 807px;
    height: 24px;
    margin: 0 auto;
    padding-top: 9px;
    font-size: 13px;
    font-weight: 400;
    line-height: 8px;
    color: #4d5060;
}
.scale > span {
    position: relative;
    z-index: 1;
    display: flex;
    flex: 1;
    justify-content: center;
    padding-right: 16px;
    border-left: 1px solid #9497a6;
    background: linear-gradient(#9497a6, #9497a6) center / 1px 100% no-repeat;
}
.scale > span:last-of-type {
    border-right: 1px solid #9497a6;
}
.text-range {
    position: absolute;
    left: 105px;
    top: 0;
    width: 615px;
    height: 24px;
    background: #e8eaf1;
    border: solid #8b8e99;
    border-width: 0 1px;
}
.text-range svg {
    position: absolute;
    fill: #fff;
    stroke: #3c3f48;
}
.indent-left {
    left: -7px;
    top: 13px;
}
.indent-first {
    left: 26px;
    top: 0;
}
.indent-right {
    right: -7px;
    top: 13px;
}
.text-range {
    z-index: 0;
}
.pages {
    padding-left: 37px;
}
.page {
    width: 833px;
    margin: 0 auto;
    padding: 0 100px 0 118px;
    background: #fff;
    color: #000;
    font-family: "Liberation Serif", "Noto Sans CJK SC", serif;
    font-weight: 400;
    box-shadow: 0 0 16px rgba(60, 65, 75, 0.28);
    clip-path: inset(0 -16px);
}
.page-end {
    height: 239px;
    padding-top: 138px;
}
.page-gap {
    width: 833px;
    height: 20px;
    margin: 0 auto;
    background: linear-gradient(#d9dadc, #e2e3e5);
    box-shadow: 0 0 16px rgba(60, 65, 75, 0.28);
    clip-path: inset(0 -16px);
}
.page-start {
    height: 900px;
    padding-top: 77px;
}
.marks {
    display: flex;
    justify-content: space-between;
    margin: 0 -25px;
}
.marks i {
    width: 26px;
    height: 24px;
    border: 0 solid #bbb;
}
.marks.bottom i {
    border-top-width: 1px;
}
.marks.top i {
    border-bottom-width: 1px;
}
.marks i:first-child {
    border-right-width: 1px;
}
.marks i:last-child {
    border-left-width: 1px;
}
.page-number {
    padding-left: 24px;
    font-size: 12px;
    line-height: 28px;
    color: #777;
}
.running-head {
    margin: 0;
    border-bottom: 1px solid #777;
    font-size: 12px;
    font-weight: 300;
    line-height: 16px;
    color: #555;
    text-align: center;
}
h1 {
    margin: 0 0 27px;
    font-size: 22px;
    font-weight: 400;
    line-height: 30px;
    text-align: center;
}
.intro, .text {
    margin: 0;
    line-height: 28px;
    text-indent: 34px;
    white-space: nowrap;
}
.intro {
    font-size: 17px;
}
h2 {
    margin: 16px 0 0;
    font-size: 20px;
    font-weight: 400;
    line-height: 30px;
}
.text {
    font-size: 16px;
    text-align: justify;
    text-align-last: justify;
}
.scrollbar {
    flex: none;
    display: flex;
    flex-direction: column;
    justify-content: space-between;
    width: 24px;
    margin-top: 37px;
    background: #e7e9ee;
}
.thumb {
    width: 19px;
    height: 55px;
    margin: 158px 0 0 1px;
    border-radius: 9px;
    background: #d2d5da;
}
.scroll-end {
    display: flex;
    flex-direction: column;
    gap: 3px;
    padding: 0 4px 6px 1px;
    background: #eef0f4;
}
.scroll-end button {
    height: 24px;
    display: flex;
    flex-direction: column;
    align-items: center;
    justify-content: center;
    gap: 1px;
}
.scroll-end .down {
    height: 22px;
    border-radius: 7px;
    background: #c0c3cf;
}
.scroll-end .caret {
    border-top-color: #8d92ab;
    border-bottom-color: #8d92ab;
}
.square {
    width: 9px;
    height: 9px;
    border: 2px solid #9094ac;
    border-radius: 2px;
}
.sidebar {
    flex: none;
    display: flex;
    flex-direction: column;
    width: 64px;
    padding: 39px 4px 0 2px;
}
.sidebar button {
    height: 54px;
    display: grid;
    place-items: center;
}
.sidebar .side-more {
    height: 69px;
    margin-top: auto;
    padding-top: 14px;
    border-top: 1px solid #dcdee4;
}
.side-more .icon {
    stroke-width: 2;
}

/* status bar */
.statusbar {
    display: flex;
    flex: none;
    align-items: center;
    height: 43px;
    border-top: 1px solid #dfe1e5;
    background: #f5f7fa;
}
.statusbar button {
    display: flex;
    align-items: center;
    gap: 4px;
    padding: 0 7px 0 13px;
    font-size: 19px;
}
.statusbar .spell {
    height: 36px;
    padding: 0 3px 0 5px;
    background: #e9f1fb;
}
.statusbar .spaced {
    padding-left: 18px;
}
.statusbar > .caret {
    margin: 0 7px 0 2px;
}
.view-tools {
    display: flex;
    align-items: center;
    margin-left: auto;
    padding-right: 16px;
}
.statusbar .view-tools button {
    width: 39px;
    height: 36px;
    padding: 0;
    justify-content: center;
}
.view-tools .bar {
    margin: 0 8px;
}
.statusbar .view-tools .pressed {
    width: 36px;
    background: #dcdfe5;
}
.statusbar .view-tools .zoom-value {
    width: 65px;
    gap: 8px;
    color: #4d5266;
}
.zoom-out .icon, .zoom-in .icon {
    stroke: #4c5272;
    stroke-width: 3;
}
.zoom {
    width: 208px;
    height: 20px;
    margin: 0 4px 0 5px;
    appearance: none;
    background: linear-gradient(90deg, #4d5266 31%, #d2d4da 31%) center / 100% 1px no-repeat;
}
.zoom::-webkit-slider-thumb {
    appearance: none;
    width: 19px;
    height: 19px;
    border: 2px solid #565a66;
    border-radius: 50%;
    background: #e8e9ec;
}

/* desktop taskbar */
.taskbar {
    display: flex;
    flex: none;
    align-items: center;
    height: 60px;
    background: linear-gradient(90deg, #233140 0%, #293646 58%, #272b30 75%, #222 100%);
    color: #fff;
}
.start {
    width: 75px;
    height: 60px;
    padding-right: 3px;
    display: grid;
    place-items: center;
}
.web-search {
    display: flex;
    align-items: center;
    width: 275px;
    height: 43px;
    padding-left: 7px;
    background: #ececec;
    color: #000;
    font-size: 15px;
}
.web-search input {
    flex: 1;
    min-width: 0;
    padding-left: 7px;
}
.web-search button {
    width: 70px;
    height: 43px;
    background: #2189ff;
    color: #fff;
}
.web-search .caret {
    margin-left: 2px;
    border-bottom-color: #999;
}
.grip {
    width: 5px;
    height: 36px;
    margin-left: 11px;
    border: solid #5b6672;
    border-width: 0 1px;
}
.apps {
    display: flex;
    height: 60px;
    gap: 3px;
    padding-left: 16px;
}
.apps button {
    display: grid;
    place-items: center;
    width: 73px;
}
.running {
    background: linear-gradient(#76b9ed, #76b9ed) center bottom / 61px 3px no-repeat;
}
.apps .current {
    background: linear-gradient(#76b9ed, #76b9ed) bottom / 100% 3px no-repeat #535e6a;
}
.weather {
    display: flex;
    align-items: center;
    gap: 12px;
    margin-left: auto;
}
.weather-text {
    display: grid;
    align-items: center;
    line-height: 24px;
}
.weather-text span {
    grid-area: 1 / 1;
}
.forecast {
    font-size: 22px;
}
.cpu {
    padding-right: 24px;
    text-align: center;
}
.tray {
    display: flex;
    align-items: center;
    gap: 12px;
    padding: 0 25px 0 22px;
}
.ime {
    width: 24px;
    font-weight: 400;
    text-align: center;
}
.tray .wide {
    margin-left: 8px;
}
.clock {
    width: 98px;
    text-align: center;
    margin-right: 26px;
}
.show-desktop {
    width: 6px;
    height: 60px;
    margin-left: 19px;
    border-left: 1px solid #777;
}

/* floating widgets */
.level {
    position: absolute;
    left: 2px;
    top: 9px;
    width: 14px;
    height: 86px;
    border: 1px solid #8d96a8;
    border-radius: 6px;
    background: repeating-linear-gradient(#64b56c 0 1px, #47604a 1px 3px) center 69px / 9px 14px no-repeat, linear-gradient(#26395f 36px, #5f6061 36px);
}
.netmeter {
    position: absolute;
    top: 173px;
    right: 2px;
    display: flex;
    align-items: center;
    color: #fff;
}
.speeds {
    width: 134px;
    height: 63px;
    margin-right: -44px;
    padding: 0 52px 0 16px;
    border-radius: 31px 0 0 31px;
    background: #31333f;
    box-shadow: 0 1px 5px rgba(0, 0, 0, 0.5);
    font-size: 15px;
    color: #9a9ca5;
}
.speeds span {
    display: flex;
    align-items: center;
    height: 32px;
}
.speeds b {
    margin-left: auto;
    font-size: 16px;
    font-weight: 700;
    color: #fff;
}
.usage {
    display: grid;
    place-items: center;
    width: 88px;
    height: 88px;
    border-radius: 50%;
    background: #4c505e;
    box-shadow: 0 1px 5px rgba(0, 0, 0, 0.6);
}
.usage > * {
    grid-area: 1 / 1;
}
.usage span {
    padding-top: 4px;
    font-size: 36px;
    line-height: 40px;
}
.usage small {
    font-size: 16px;
}
.pointer {
    position: absolute;
    left: 1839px;
    top: 588px;
}
```
